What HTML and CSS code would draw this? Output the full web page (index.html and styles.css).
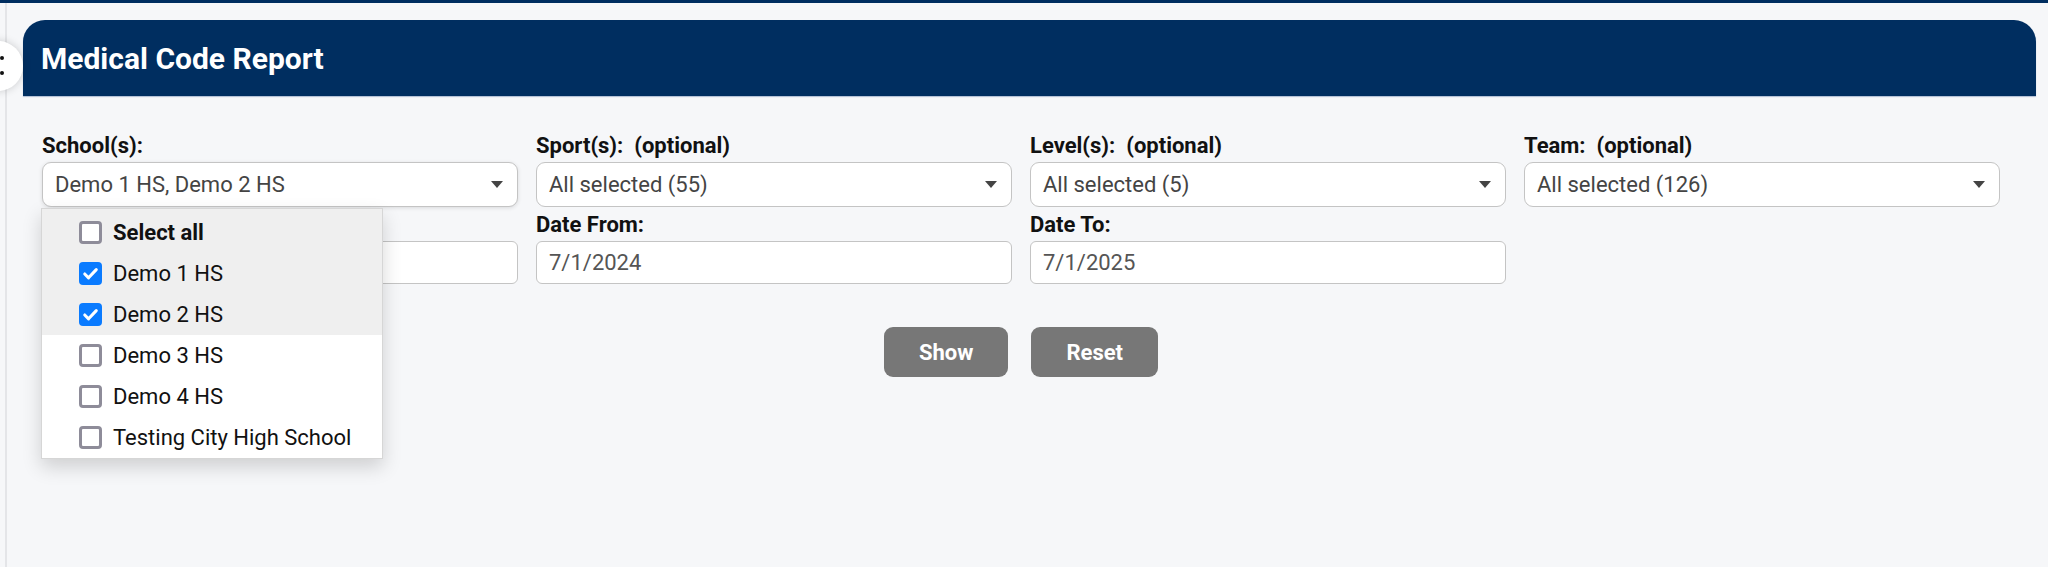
FILE: index.html
```html
<!DOCTYPE html>
<html>
<head lang="en">
    <meta charset="UTF-8">
    <title>Medical Code Report</title>
    <link rel="stylesheet" href="styles.css">
</head>
<body>
    <div id="topbar"></div>
    <div id="main">
        <div id="report">
            <div class="head">
                <span class="toggle"><i></i><i></i></span>
                <h1>Medical Code Report</h1>
            </div>
            <div class="form">
                <div class="fields">
                    <div class="field">
                        <label>School(s):</label>
                        <div class="select-wrap">
                            <div class="select focused"><span class="val">Demo 1 HS, Demo 2 HS</span><span class="caret"></span></div>
                            <ul class="dropdown">
                                <li class="hl first"><span class="cb"></span><b>Select all</b></li>
                                <li class="hl"><span class="cb on"><svg viewBox="0 0 24 24"><path d="M6 12.5l4 4 8-8.5"/></svg></span>Demo 1 HS</li>
                                <li class="hl"><span class="cb on"><svg viewBox="0 0 24 24"><path d="M6 12.5l4 4 8-8.5"/></svg></span>Demo 2 HS</li>
                                <li><span class="cb"></span>Demo 3 HS</li>
                                <li><span class="cb"></span>Demo 4 HS</li>
                                <li><span class="cb"></span>Testing City High School</li>
                            </ul>
                        </div>
                    </div>
                    <div class="field">
                        <label>Sport(s):&nbsp; (optional)</label>
                        <div class="select"><span class="val">All selected (55)</span><span class="caret"></span></div>
                    </div>
                    <div class="field">
                        <label>Level(s):&nbsp; (optional)</label>
                        <div class="select"><span class="val">All selected (5)</span><span class="caret"></span></div>
                    </div>
                    <div class="field">
                        <label>Team:&nbsp; (optional)</label>
                        <div class="select"><span class="val">All selected (126)</span><span class="caret"></span></div>
                    </div>
                    <div class="field">
                        <label>&nbsp;</label>
                        <input class="text" type="text" value="">
                    </div>
                    <div class="field">
                        <label>Date From:</label>
                        <input class="text" type="text" value="7/1/2024">
                    </div>
                    <div class="field">
                        <label>Date To:</label>
                        <input class="text" type="text" value="7/1/2025">
                    </div>
                    <div class="field"></div>
                </div>
                <div class="buttons">
                    <button class="btn">Show</button>
                    <button class="btn">Reset</button>
                </div>
            </div>
        </div>
    </div>
</body>
</html>
```

FILE: styles.css
```css
*{
    margin: 0;
    padding: 0;
    box-sizing: border-box;
}
ul{
    list-style: none;
}
body{
    background: #f6f7f9;
    font-family: Roboto, "Liberation Sans", Arial, sans-serif;
    color: #111;
    height: 567px;
    overflow: hidden;
}
#topbar{
    height: 3px;
    background: #002e60;
}
#main{
    margin-left: 5px;
    height: 564px;
    border-left: 2px solid #e4e5e8;
    padding: 17px 12px 0 16px;
}
#report{
    position: relative;
}
.head{
    position: relative;
    height: 76px;
    background: #002e60;
    border-radius: 22px 22px 0 0;
    box-shadow: 0 1px 1px rgba(40, 80, 140, 0.35);
    display: flex;
    align-items: center;
    padding-left: 18px;
}
.head h1{
    color: #fff;
    font-size: 30px;
    font-weight: 700;
}
.toggle{
    position: absolute;
    left: -50px;
    top: 21px;
    width: 50px;
    height: 50px;
    border-radius: 50%;
    background: #fff;
    box-shadow: 0 0 8px rgba(0, 0, 0, 0.18);
}
.toggle i{
    position: absolute;
    left: 27px;
    width: 4px;
    height: 4px;
    border-radius: 50%;
    background: #111;
}
.toggle i:first-child{
    top: 15px;
}
.toggle i:last-child{
    top: 30px;
}
.form{
    padding: 38px 0 0 19px;
}
.fields{
    display: grid;
    grid-template-columns: repeat(4, 476px);
    column-gap: 18px;
    row-gap: 6px;
}
.field label{
    display: block;
    font-size: 22px;
    font-weight: 700;
    line-height: 24px;
    margin-bottom: 4px;
    color: #111;
    white-space: pre;
}
.select-wrap{
    position: relative;
}
.select{
    height: 45px;
    background: #fff;
    border: 1px solid #c4c4c4;
    border-radius: 9px;
    display: flex;
    align-items: center;
    padding: 0 14px 0 12px;
    font-size: 22px;
    color: #444;
}
.select.focused{
    box-shadow: 0 1px 4px rgba(0, 0, 0, 0.12);
}
.select .val{
    flex: 1;
}
.caret{
    width: 0;
    height: 0;
    border-left: 6px solid transparent;
    border-right: 6px solid transparent;
    border-top: 7px solid #444;
}
.text{
    display: block;
    width: 100%;
    height: 43px;
    background: #fff;
    border: 1px solid #c4c4c4;
    border-radius: 6px;
    padding: 0 12px;
    font-family: inherit;
    font-size: 22px;
    color: #555;
    outline: none;
}
.dropdown{
    position: absolute;
    z-index: 5;
    top: calc(100% + 1px);
    left: -1px;
    width: 342px;
    background: #fff;
    border: 1px solid #d6d6d6;
    box-shadow: 0 8px 18px rgba(0, 0, 0, 0.16);
}
.dropdown li{
    height: 41px;
    display: flex;
    align-items: center;
    padding-left: 37px;
    font-size: 22px;
    color: #111;
}
.dropdown li.first{
    height: 44px;
    padding-top: 3px;
}
.dropdown li.hl{
    background: #efefef;
}
.cb{
    width: 23px;
    height: 23px;
    margin-right: 11px;
    border: 3px solid #8e8c99;
    border-radius: 4px;
    background: #fff;
    flex: none;
}
.cb.on{
    border: 0;
    background: #0a7bff;
}
.cb svg{
    display: block;
    width: 23px;
    height: 23px;
    fill: none;
    stroke: #fff;
    stroke-width: 3.2;
    stroke-linecap: round;
    stroke-linejoin: round;
}
.buttons{
    width: 1958px;
    display: flex;
    justify-content: center;
    gap: 23px;
    margin-top: 43px;
}
.btn{
    height: 50px;
    padding: 0 35px;
    border: 0;
    border-radius: 9px;
    background: #777;
    color: #fff;
    font-family: inherit;
    font-size: 22px;
    font-weight: 700;
}
```
